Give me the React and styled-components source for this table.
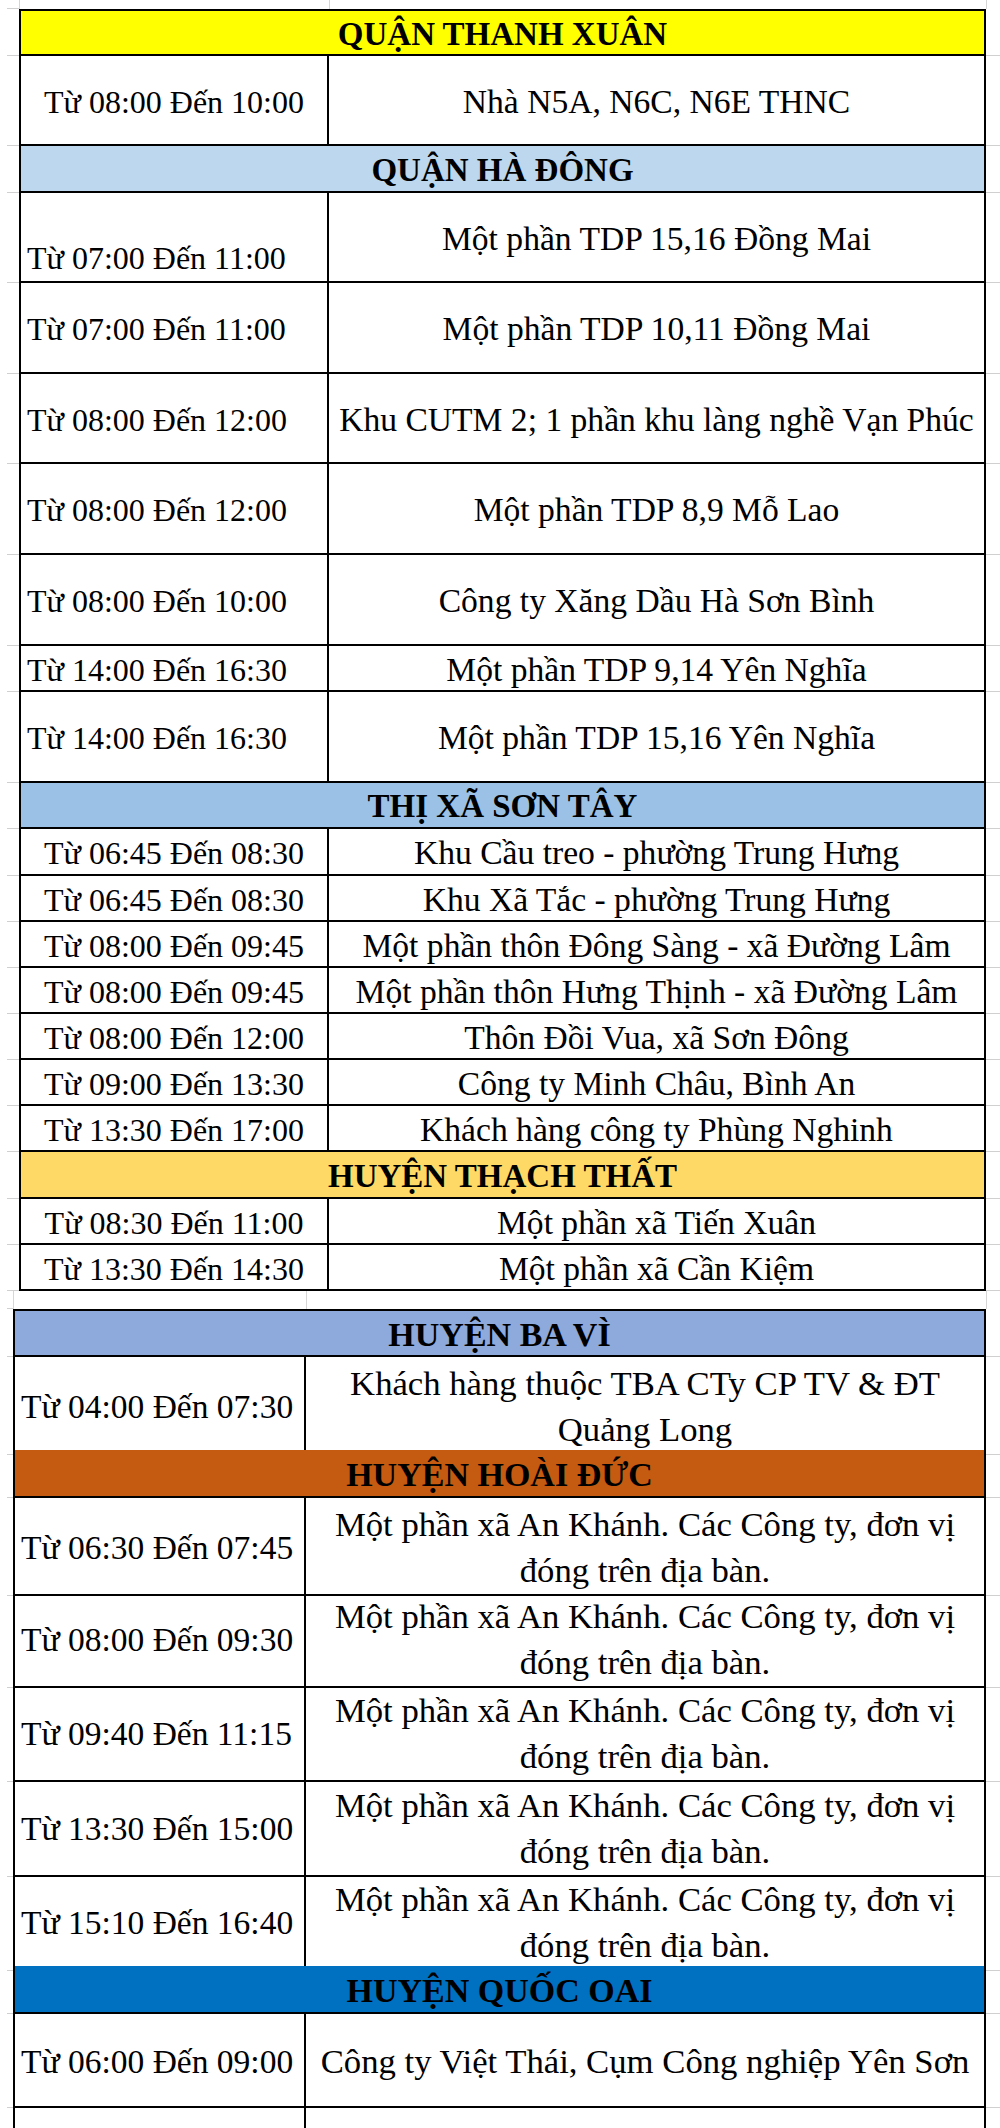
import React from "react";
import styled, { createGlobalStyle } from "styled-components";

const GlobalStyle = createGlobalStyle`
  html, body {
    margin: 0;
    padding: 0;
    background: #fff;
    overflow: hidden;
  }
  body {
    font-family: "Liberation Serif", "Times New Roman", serif;
    color: #000;
  }
`;

const Sheet = styled.div`
  display: flex;
  flex-direction: column;
  width: 1000px;
  padding-left: 7px;
  box-sizing: border-box;
`;

const Line = styled.div`
  display: grid;
  grid-template-columns: ${p => p.$cols};
  height: ${p => p.$h}px;
  & > * {
    box-sizing: border-box;
    min-width: 0;
  }
`;

// faint excel gridline ticks outside the bordered table
const Edge = styled.div`
  border-bottom: 1px solid #d0d0d0;
`;

const GapCell = styled.div`
  border-left: 1px solid #d6d6d6;
`;

const Title = styled.div`
  grid-column: 2 / 4;
  background: ${p => p.$bg};
  border: 2px solid #000;
  border-top-width: ${p => (p.$first ? 2 : 0)}px;
  display: flex;
  align-items: center;
  justify-content: center;
  padding-top: 3px;
  font-weight: 700;
  font-size: ${p => p.$fs}px;
  line-height: 1;
  white-space: nowrap;
`;

const TimeCell = styled.div`
  border: 2px solid #000;
  border-top: none;
  display: flex;
  align-items: ${p => (p.$v === "end" ? "flex-end" : "center")};
  justify-content: ${p => (p.$left ? "flex-start" : "center")};
  padding: ${p => (p.$v === "end" ? "0 0 4px" : "4px 0 0")};
  padding-left: ${p => (p.$left ? 6 : 0)}px;
  font-size: ${p => p.$fs}px;
  line-height: 1.15;
  white-space: nowrap;
`;

const PlaceCell = styled.div`
  border-right: 2px solid #000;
  border-bottom: 2px solid #000;
  display: flex;
  flex-direction: column;
  align-items: center;
  justify-content: center;
  padding-top: 4px;
  font-size: ${p => p.$fs}px;
  line-height: ${p => (p.$multi ? "46px" : "1.15")};
  text-align: center;
  white-space: nowrap;
`;

const tables = [
  {
    cols: "12px 310px 657px 1fr",
    fs: 32,
    placeFs: 33.6,
    titleFs: 33,
    top: 9,
    sections: [
      {
        title: "QUẬN THANH XUÂN",
        bg: "#ffff00",
        h: 47,
        rows: [{ t: "Từ 08:00 Đến 10:00", p: "Nhà N5A, N6C, N6E THNC", h: 90 }]
      },
      {
        title: "QUẬN HÀ ĐÔNG",
        bg: "#bdd7ee",
        h: 47,
        left: true,
        rows: [
          { t: "Từ 07:00 Đến 11:00", p: "Một phần TDP 15,16 Đồng Mai", h: 90, v: "end" },
          { t: "Từ 07:00 Đến 11:00", p: "Một phần TDP 10,11 Đồng Mai", h: 91 },
          { t: "Từ 08:00 Đến 12:00", p: "Khu CUTM 2; 1 phần khu làng nghề Vạn Phúc", h: 90 },
          { t: "Từ 08:00 Đến 12:00", p: "Một phần TDP 8,9 Mỗ Lao", h: 91 },
          { t: "Từ 08:00 Đến 10:00", p: "Công ty Xăng Dầu Hà Sơn Bình", h: 91 },
          { t: "Từ 14:00 Đến 16:30", p: "Một phần TDP 9,14 Yên Nghĩa", h: 46 },
          { t: "Từ 14:00 Đến 16:30", p: "Một phần TDP 15,16 Yên Nghĩa", h: 91 }
        ]
      },
      {
        title: "THỊ XÃ SƠN TÂY",
        bg: "#9bc2e6",
        h: 46,
        rows: [
          { t: "Từ 06:45 Đến 08:30", p: "Khu Cầu treo - phường Trung Hưng", h: 47 },
          { t: "Từ 06:45 Đến 08:30", p: "Khu Xã Tắc - phường Trung Hưng", h: 46 },
          { t: "Từ 08:00 Đến 09:45", p: "Một phần thôn Đông Sàng - xã Đường Lâm", h: 46 },
          { t: "Từ 08:00 Đến 09:45", p: "Một phần thôn Hưng Thịnh - xã Đường Lâm", h: 46 },
          { t: "Từ 08:00 Đến 12:00", p: "Thôn Đồi Vua, xã Sơn Đông", h: 46 },
          { t: "Từ 09:00 Đến 13:30", p: "Công ty Minh Châu, Bình An", h: 46 },
          { t: "Từ 13:30 Đến 17:00", p: "Khách hàng công ty Phùng Nghinh", h: 46 }
        ]
      },
      {
        title: "HUYỆN THẠCH THẤT",
        bg: "#ffd966",
        h: 47,
        rows: [
          { t: "Từ 08:30 Đến 11:00", p: "Một phần xã Tiến Xuân", h: 46 },
          { t: "Từ 13:30 Đến 14:30", p: "Một phần xã Cần Kiệm", h: 46 }
        ]
      }
    ]
  },
  {
    cols: "6px 293px 680px 1fr",
    fs: 33.5,
    placeFs: 34.7,
    titleFs: 34,
    top: 18,
    sections: [
      {
        title: "HUYỆN BA VÌ",
        bg: "#8ea9db",
        h: 48,
        left: true,
        rows: [
          { t: "Từ 04:00 Đến 07:30", p: ["Khách hàng thuộc TBA CTy CP TV & ĐT", "Quảng Long"], h: 93 }
        ]
      },
      {
        title: "HUYỆN HOÀI ĐỨC",
        bg: "#c55a11",
        h: 48,
        left: true,
        rows: [
          ["Từ 06:30 Đến 07:45", 92],
          ["Từ 08:00 Đến 09:30", 94],
          ["Từ 09:40 Đến 11:15", 95],
          ["Từ 13:30 Đến 15:00", 94],
          ["Từ 15:10 Đến 16:40", 93]
        ].map(([t, h]) => ({
          t,
          h,
          p: ["Một phần xã An Khánh. Các Công ty, đơn vị", "đóng trên địa bàn."]
        }))
      },
      {
        title: "HUYỆN QUỐC OAI",
        bg: "#0070c0",
        h: 48,
        left: true,
        rows: [
          { t: "Từ 06:00 Đến 09:00", p: "Công ty Việt Thái, Cụm Công nghiệp Yên Sơn", h: 94 },
          { t: "", p: "", h: 94 }
        ]
      }
    ]
  }
];

const Gap = ({ cols, h }) => (
  <Line $cols={cols} $h={h}>
    <Edge />
    <GapCell />
    <GapCell />
    <GapCell />
  </Line>
);

const Table = ({ table }) => (
  <>
    <Gap cols={table.cols} h={table.top} />
    {table.sections.map((s, i) => (
      <React.Fragment key={s.title}>
        <Line $cols={table.cols} $h={s.h}>
          <Edge />
          <Title $bg={s.bg} $fs={table.titleFs} $first={i === 0}>
            {s.title}
          </Title>
          <Edge />
        </Line>
        {s.rows.map((r, j) => (
          <Line key={j} $cols={table.cols} $h={r.h}>
            <Edge />
            <TimeCell $fs={table.fs} $left={s.left} $v={r.v}>
              {r.t}
            </TimeCell>
            <PlaceCell $fs={table.placeFs} $multi={Array.isArray(r.p)}>
              {Array.isArray(r.p) ? r.p.map(l => <span key={l}>{l}</span>) : r.p}
            </PlaceCell>
            <Edge />
          </Line>
        ))}
      </React.Fragment>
    ))}
  </>
);

export default function App() {
  return (
    <>
      <GlobalStyle />
      <Sheet>
        {tables.map((t, i) => (
          <Table key={i} table={t} />
        ))}
      </Sheet>
    </>
  );
}
